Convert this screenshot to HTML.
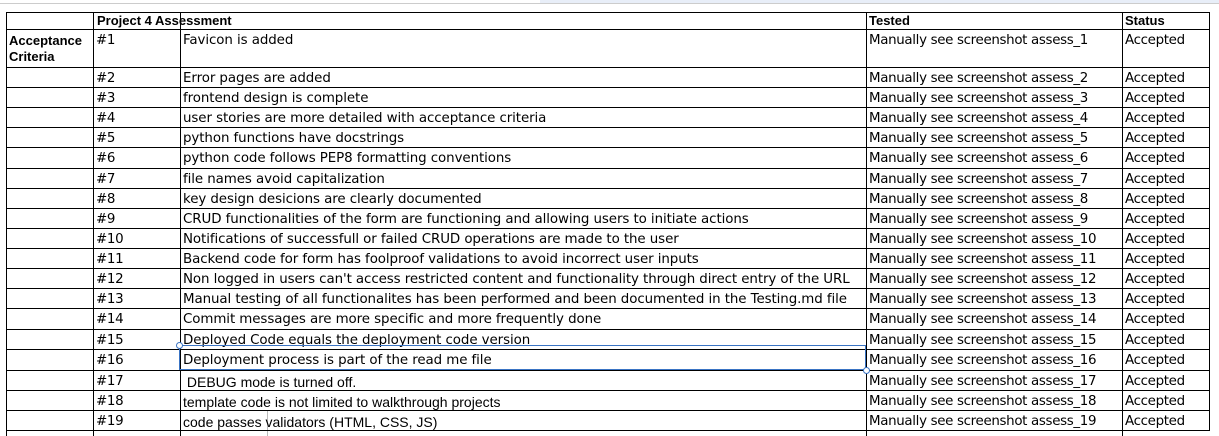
<!DOCTYPE html>
<html><head><meta charset="utf-8"><style>
body{margin:0;width:1219px;height:436px;background:#fff;position:relative;overflow:hidden}
.h{position:absolute;height:1px;background:#000;left:6px;width:1204px}
.v{position:absolute;width:1px;background:#000;top:12px;height:424px}
.t{position:absolute;font:13.4px "DejaVu Sans",sans-serif;color:#000;white-space:nowrap;line-height:16px;letter-spacing:-0.33px}
.i{letter-spacing:-0.08px}
.a{font-family:"Liberation Sans",Arial,sans-serif;font-size:14px;letter-spacing:0}
.b{font:bold 13px "Liberation Sans",Arial,sans-serif;letter-spacing:0}
</style></head><body>
<div style="position:absolute;left:0;top:0;width:1219px;height:3px;border-bottom:1px solid #ccc"></div>
<div style="position:absolute;left:540px;top:0;width:700px;height:3px;background:#e8eef8"></div>
<div class="v" style="left:6px"></div>
<div class="v" style="left:93px"></div>
<div class="v" style="left:180px"></div>
<div class="v" style="left:866px"></div>
<div class="v" style="left:1122px"></div>
<div class="v" style="left:1209px;height:418px"></div>
<div style="position:absolute;left:267px;top:410px;width:1px;height:26px;background:#bbb"></div>
<div id="g"></div>
<div style="position:absolute;left:179px;top:345px;width:687px;height:25px;border:1px solid #3a74c4;box-sizing:border-box"></div>
<div style="position:absolute;left:176px;top:342px;width:5px;height:5px;border:1px solid #3a74c4;border-radius:50%;background:#fff"></div>
<div style="position:absolute;left:863px;top:367px;width:5px;height:5px;border:1px solid #3a74c4;border-radius:50%;background:#fff"></div>
<script>
(function(){
var ys=[12,29,67,87,107,127,147,168,188,208,228,248,268,288,308,329,349,370,390,410,430];
var g=document.getElementById('g'),h='';
ys.forEach(function(y){h+='<div class="h" style="top:'+y+'px"></div>';});
h+='<div class="t b" style="left:97px;top:13px">Project 4 Assessment</div>';
h+='<div class="t b" style="left:869px;top:13px">Tested</div>';
h+='<div class="t b" style="left:1125px;top:13px">Status</div>';
h+='<div class="t b" style="left:9px;top:33px;line-height:16px">Acceptance<br>Criteria</div>';
var items=["Favicon is added","Error pages are added","frontend design is complete","user stories are more detailed with acceptance criteria","python functions have docstrings","python code follows PEP8 formatting conventions","file names avoid capitalization","key design desicions are clearly documented","CRUD functionalities of the form are functioning and allowing users to initiate actions","Notifications of successfull or failed CRUD operations are made to the user","Backend code for form has foolproof validations to avoid incorrect user inputs","Non logged in users can't access restricted content and functionality through direct entry of the URL","Manual testing of all functionalites has been performed and been documented in the Testing.md file","Commit messages are more specific and more frequently done","Deployed Code equals the deployment code version","Deployment process is part of the read me file","&nbsp;DEBUG mode is turned off.","template code is not limited to walkthrough projects","code passes validators (HTML, CSS, JS)"];
for(var i=0;i<19;i++){
 var ty=ys[i+1]+4;
 if(i==0) ty=ys[1]+4;
 var cls=i>=16?'t a':'t i';
 h+='<div class="t" style="left:96px;top:'+ty+'px">#'+(i+1)+'</div>';
 h+='<div class="'+cls+'" style="left:183px;top:'+ty+'px">'+items[i]+'</div>';
 h+='<div class="t" style="left:869px;top:'+ty+'px">Manually see screenshot assess_'+(i+1)+'</div>';
 h+='<div class="t" style="left:1125px;top:'+ty+'px">Accepted</div>';
}
g.innerHTML=h;
})();
</script>
</body></html>
